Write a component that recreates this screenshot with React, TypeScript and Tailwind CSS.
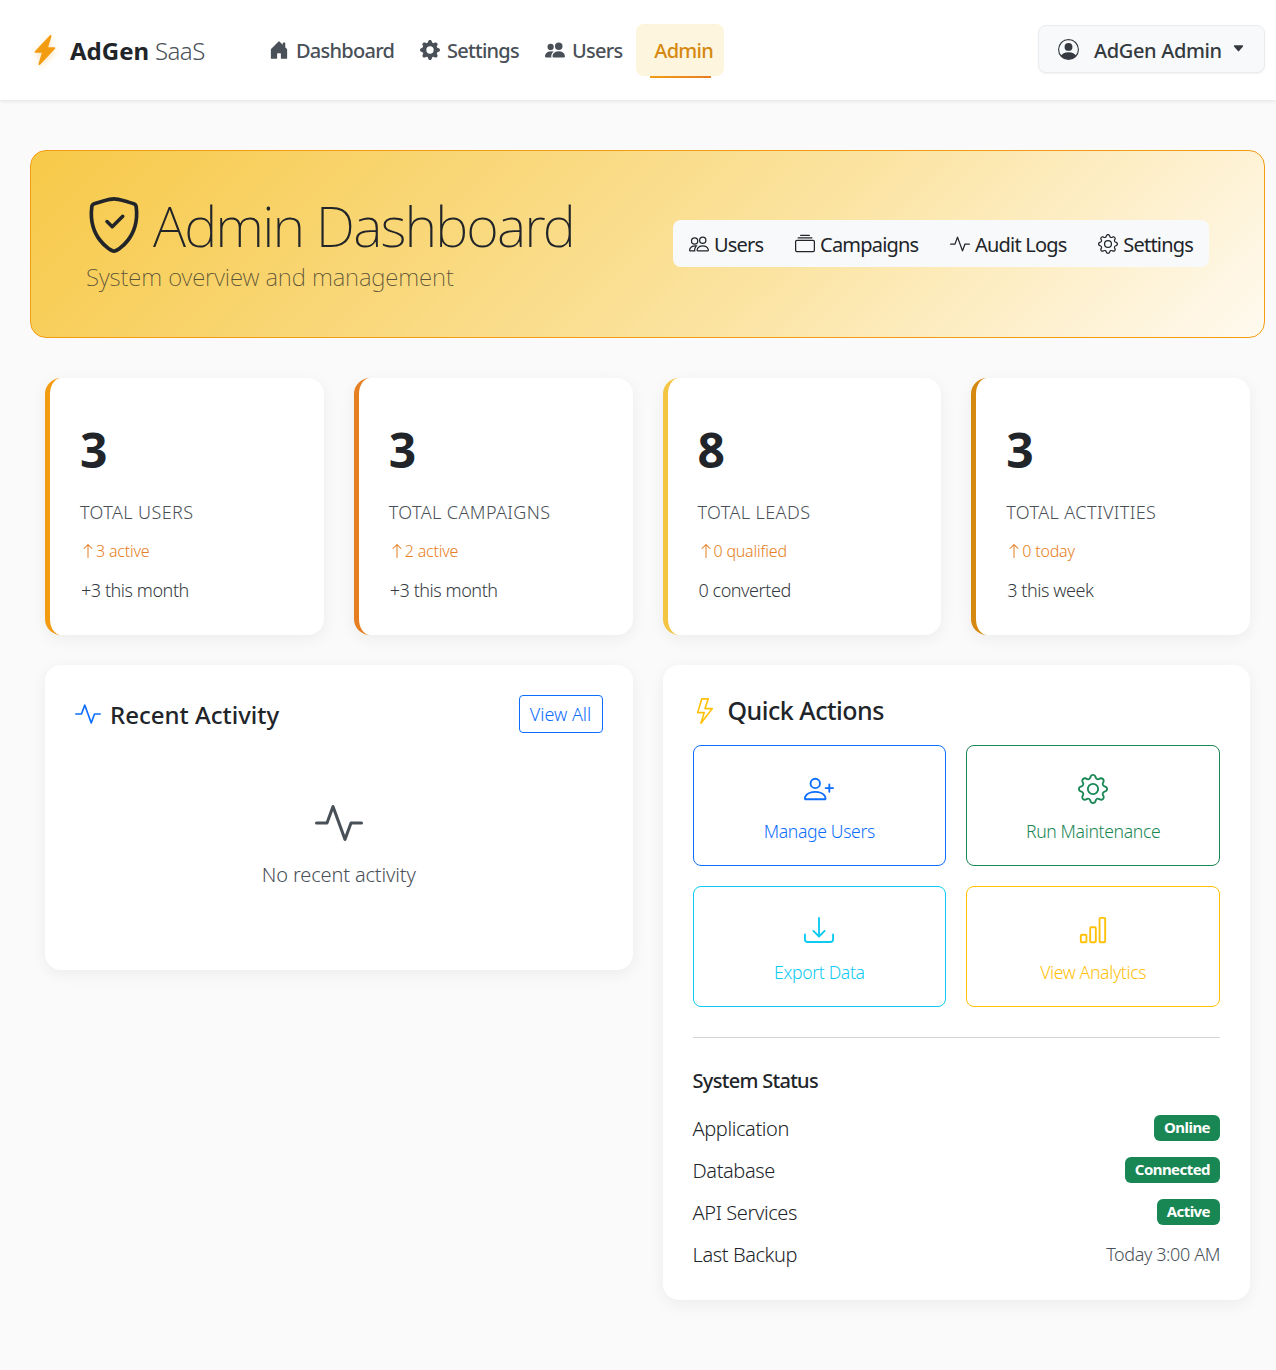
import React from 'react';
import {
  BsActivity,
  BsArrowUp,
  BsBarChart,
  BsCaretDownFill,
  BsCollection,
  BsDownload,
  BsGear,
  BsGearFill,
  BsHouseDoorFill,
  BsLightning,
  BsLightningChargeFill,
  BsPeople,
  BsPeopleFill,
  BsPersonCircle,
  BsPersonPlus,
  BsShieldCheck,
} from 'react-icons/bs';

const stats = [
  { value: '3', label: 'TOTAL USERS', trend: '3 active', note: '+3 this month', border: 'border-l-[#f39c12]' },
  { value: '3', label: 'TOTAL CAMPAIGNS', trend: '2 active', note: '+3 this month', border: 'border-l-[#e67e22]' },
  { value: '8', label: 'TOTAL LEADS', trend: '0 qualified', note: '0 converted', border: 'border-l-[#f4c542]' },
  { value: '3', label: 'TOTAL ACTIVITIES', trend: '0 today', note: '3 this week', border: 'border-l-[#d68910]' },
];

const actions = [
  { label: 'Manage Users', icon: BsPersonPlus, color: 'border-[#0d6efd] text-[#0d6efd]' },
  { label: 'Run Maintenance', icon: BsGear, color: 'border-[#198754] text-[#198754]' },
  { label: 'Export Data', icon: BsDownload, color: 'border-[#0dcaf0] text-[#0dcaf0]' },
  { label: 'View Analytics', icon: BsBarChart, color: 'border-[#ffc107] text-[#ffc107]' },
];

const statuses = [
  { name: 'Application', badge: 'Online' },
  { name: 'Database', badge: 'Connected' },
  { name: 'API Services', badge: 'Active' },
];

function NavLink({ icon: Icon, label }: { icon: React.ComponentType<{ size?: number }>; label: string }) {
  return (
    <a className="flex h-[52px] items-center gap-[7px] px-[13px] text-[#495057]">
      <Icon size={20} />
      <span className="mt-[2px]">{label}</span>
    </a>
  );
}

function QuickLink({ icon: Icon, label }: { icon: React.ComponentType<{ size?: number; className?: string }>; label: string }) {
  return (
    <a className="flex items-center gap-[5px] whitespace-nowrap text-[#212529]">
      <Icon size={20} className="mt-[1px]" />
      <span className="mt-[3px]">{label}</span>
    </a>
  );
}

export default function App() {
  return (
    <div className="min-h-[1370px] bg-[#fafafa] font-['Noto_Sans',sans-serif] text-[#212529]">
      {/* Header */}
      <header className="flex h-[100px] items-center bg-white pl-[30px] pr-[11px] shadow-[0_1px_4px_rgba(0,0,0,0.1)]">
        <div className="flex w-[226px] items-center text-[24px] leading-none">
          <BsLightningChargeFill size={30} className="text-[#f39c12] drop-shadow-[0_2px_3px_rgba(243,156,18,0.3)]" />
          <span className="ml-[10px] mt-[2px] font-bold">AdGen</span>
          <span className="ml-[6px] mt-[2px] font-light tracking-[-0.6px] text-[#495057]">SaaS</span>
        </div>
        <nav className="flex items-center text-[20px] font-medium tracking-[-0.75px]">
          <NavLink icon={BsHouseDoorFill} label="Dashboard" />
          <NavLink icon={BsGearFill} label="Settings" />
          <NavLink icon={BsPeopleFill} label="Users" />
          <a className="relative ml-[1px] flex h-[52px] items-center rounded-lg bg-[#fdf5de] pl-[18px] pr-[11px] text-[#d68910]">
            <span className="mt-[2px]">Admin</span>
            <span className="absolute bottom-[-2px] left-[14px] h-[2px] w-[61px] bg-gradient-to-r from-[#f39c12] to-[#e67e22]" />
          </a>
        </nav>
        <button className="mb-[2px] ml-auto flex h-[48px] w-[227px] items-center rounded-lg border border-[#e9ecef] bg-[#f8f9fa] pl-[19px] text-[20px] font-medium tracking-[-0.35px] text-[#343a40] shadow-[0_1px_2px_rgba(0,0,0,0.05)]">
          <BsPersonCircle size={21} />
          <span className="ml-[15px] mt-[4px]">AdGen Admin</span>
          <BsCaretDownFill size={13} className="ml-[10px] mb-[2px]" />
        </button>
      </header>

      <main className="pl-[30px] pr-[11px] pt-[50px]">
        {/* Banner */}
        <section className="flex h-[188px] items-center rounded-2xl border border-[#f39c12] bg-[linear-gradient(135deg,#f7c948_0%,#fbe3a0_60%,#fffaf0_100%)] pl-[55px] pr-[55px]">
          <div className="w-[587px]">
            <h1 className="flex items-center text-[56px] font-extralight leading-[60px] tracking-[-1.87px]">
              <BsShieldCheck size={56} className="mr-[11px] shrink-0" />
              Admin Dashboard
            </h1>
            <p className="mt-[6px] text-[24px] font-extralight leading-[32px] tracking-[-0.1px] text-[#5a5238]">
              System overview and management
            </p>
          </div>
          <div className="mb-[2px] flex h-[47px] w-[536px] items-center justify-between rounded-lg bg-[#f8f9fa] pl-[16px] pr-[16px] text-[20px] tracking-[-0.8px]">
            <QuickLink icon={BsPeople} label="Users" />
            <QuickLink icon={BsCollection} label="Campaigns" />
            <QuickLink icon={BsActivity} label="Audit Logs" />
            <QuickLink icon={BsGear} label="Settings" />
          </div>
        </section>

        {/* Stats */}
        <section className="mx-[15px] mt-[40px] grid grid-cols-4 gap-[30px]">
          {stats.map((stat) => (
            <div
              key={stat.label}
              className={`h-[257px] rounded-2xl border-l-[5px] bg-white pl-[30px] pt-[43px] shadow-[0_4px_16px_rgba(0,0,0,0.06)] ${stat.border}`}
            >
              <div className="text-[48px] font-bold leading-[58px]">{stat.value}</div>
              <div className="mt-[21px] text-[18px] font-light leading-[24px] tracking-[0.4px] text-[#495057]">
                {stat.label}
              </div>
              <div className="mt-[15px] flex items-center text-[16px] font-light leading-[24px] tracking-[-0.2px] text-[#e67e22]">
                <BsArrowUp size={16} />
                {stat.trend}
              </div>
              <div className="ml-[1px] mt-[15px] text-[18px] font-light leading-[24px] tracking-[-0.45px] text-[#343a40]">{stat.note}</div>
            </div>
          ))}
        </section>

        <section className="mx-[15px] mt-[30px] grid grid-cols-2 items-start gap-[30px]">
          {/* Recent activity */}
          <div className="h-[305px] rounded-2xl bg-white p-[30px] shadow-[0_4px_16px_rgba(0,0,0,0.06)]">
            <div className="flex items-center justify-between">
              <h2 className="flex items-center gap-[9px] text-[24px] font-medium">
                <BsActivity size={26} className="text-[#0d6efd]" />
                <span className="mt-[2px]">Recent Activity</span>
              </h2>
              <button className="h-[38px] w-[84px] rounded border border-[#0d6efd] text-[18px] font-light text-[#0d6efd]">
                View All
              </button>
            </div>
            <div className="mt-[66px] flex flex-col items-center text-[#495057]">
              <BsActivity size={48} />
              <p className="mt-[13px] text-[20px] font-light leading-[30px] tracking-[-0.15px] text-[#495057]">No recent activity</p>
            </div>
          </div>

          {/* Quick actions */}
          <div className="h-[635px] rounded-2xl bg-white p-[30px] shadow-[0_4px_16px_rgba(0,0,0,0.06)]">
            <h2 className="flex h-[32px] items-center gap-[10px] text-[25px] font-medium tracking-[-0.5px]">
              <BsLightning size={26} className="-ml-[1px] mb-[1px] text-[#ffc107]" />
              <span className="mb-[1px]">Quick Actions</span>
            </h2>
            <div className="mt-[18px] grid grid-cols-2 gap-[20px]">
              {actions.map(({ label, icon: Icon, color }) => (
                <button
                  key={label}
                  className={`flex h-[121px] flex-col items-center rounded-lg border pt-[28px] text-[17.6px] font-[350] tracking-[-0.35px] ${color}`}
                >
                  <Icon size={30} />
                  <span className="mt-[15px] leading-[24px]">{label}</span>
                </button>
              ))}
            </div>
            <hr className="mt-[30px] border-t border-[#d3d3d3]" />
            <h3 className="mt-[29px] text-[20px] font-medium leading-[28px] tracking-[-0.7px]">System Status</h3>
            <div className="mt-[13px] flex flex-col text-[20px] font-[350] tracking-[-0.4px]">
              {statuses.map((row) => (
                <div key={row.name} className="flex h-[42px] items-center justify-between">
                  <span>{row.name}</span>
                  <span className="mb-[3px] flex h-[26px] items-center rounded-md bg-[#198754] px-[10px] pb-[1px] text-[15px] font-bold tracking-[-0.55px] text-white">
                    {row.badge}
                  </span>
                </div>
              ))}
              <div className="flex h-[42px] items-center justify-between">
                <span>Last Backup</span>
                <span className="mb-[2px] text-[18px] text-[#495057]">Today 3:00 AM</span>
              </div>
            </div>
          </div>
        </section>
      </main>
    </div>
  );
}
